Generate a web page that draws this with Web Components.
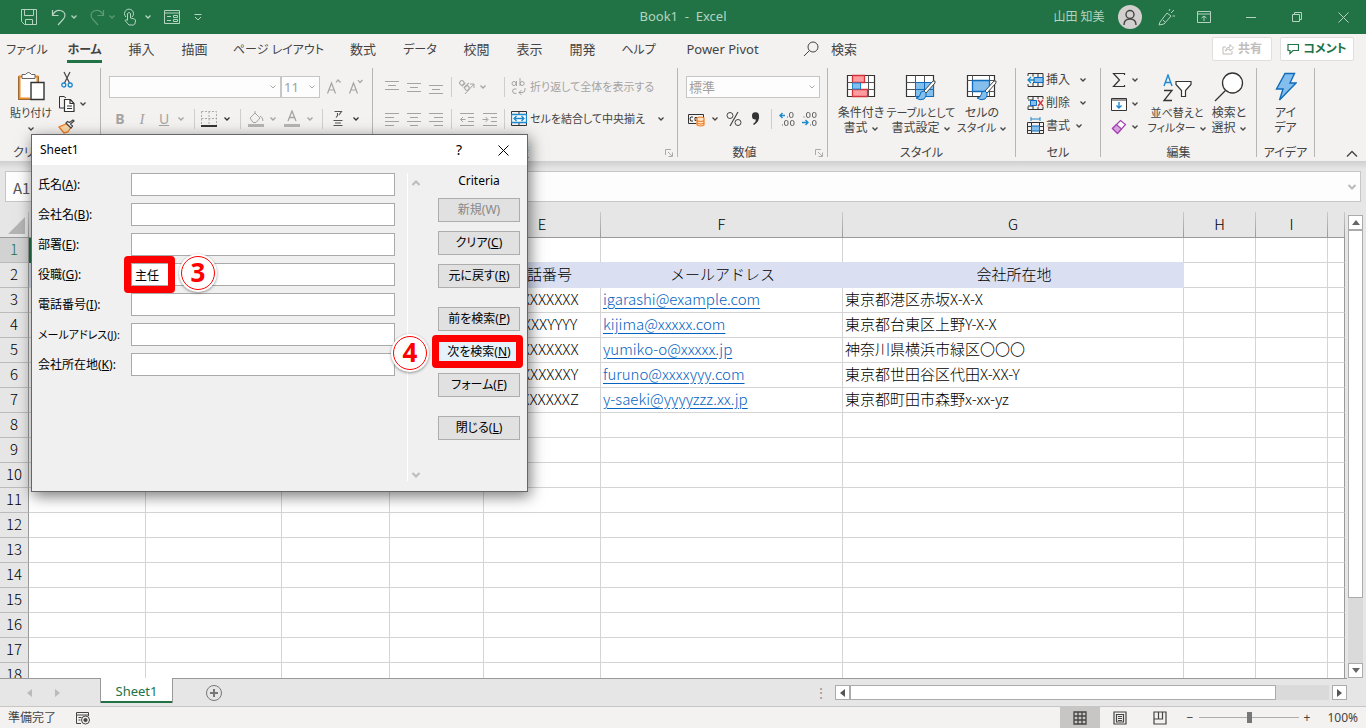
<!DOCTYPE html>
<html lang="ja">
<head>
<meta charset="utf-8">
<title>Book1 - Excel</title>
<style>
html, body { margin: 0; height: 100%; overflow: hidden; }
body { font: 12px/16px "Noto Sans", "Noto Sans CJK JP", sans-serif; color: #444; }
</style>
</head>
<body>
<excel-app></excel-app>
<script>
const define = (name, html, setup) => {
  const template = document.createElement('template');
  template.innerHTML = html;
  customElements.define(name, class extends HTMLElement {
    constructor() {
      super();
      this.attachShadow({ mode: 'open' }).append(template.content.cloneNode(true));
    }
    connectedCallback() { if (setup) setup(this, this.shadowRoot); }
  });
};

/* name: [width, height, markup] */
const brush = '<path d="M28 7 19 17l2 2 9-10q1-3-2-2z" fill="#fff" stroke="#444"/><path d="M19 17q-4 0-4 4-1 3-4 3 4 3 8 1 3-3 2-6z" fill="#83beec" stroke="#0f6cbd"/>';
const ICONS = {
  save: [18, 18, '<path d="M1.5 1.5h15v15h-12l-3-3z M4.5 1.5v6h9v-6 M5.5 16.5v-5h7v5"/>'],
  undo: [16, 18, '<path d="M1.5 2v5.500h6 M1.500 7.500Q4 2 9 2.500c6 1 6 6 3 9l-5 5.500" stroke-width="1.200"/>'],
  redo: [16, 18, '<path d="M14.500 2v5.500h-6 M14.500 7.500Q12 2 7 2.500c-6 1-6 6-3 9l5 5.500" stroke-width="1.200"/>'],
  touch: [14, 18, '<path d="M3 9a4.500 4.500 0 1 1 6 0 M4.500 12V5.500q1.500-2 3 0V10l4 1q1 .5 1 2-.3 4-2 4H6L2 12.500q1-1.500 2.500 0"/>'],
  form: [18, 16, '<path d="M1.500 1.500h15v13h-15z M1.500 4h15 M4 7.500h4 M4 11.500h4 M10.500 6.500h4v2h-4z M10.500 10.500h4v2h-4z"/>'],
  qat: [8, 8, '<path d="M.5 1.500h7 M1 4l3 3 3-3"/>'],
  chev: [8, 6, '<path d="M1.500 1.500 4 4l2.500-2.500" stroke-width="1.3"/>'],
  chevbig: [10, 8, '<path d="M1.500 2 5 5.500 8.500 2" stroke-width="2"/>'],
  chevup: [12, 8, '<path d="M1 6.500 6 1.500l5 5" stroke-width="1.300"/>'],
  user: [24, 24, '<circle cx="12" cy="12" r="12" fill="#d2d0ce" stroke="none"/><g stroke="#444" stroke-width="1.400"><circle cx="12" cy="9.500" r="4"/><path d="M6 20q0-6 6-6t6 6"/></g>'],
  pen: [18, 18, '<path d="m2 14 7-9 4 3-7 8-5 1z M5 12l2 2 M11 3l1-2 M13 5l3-3 M14.500 8h2.500"/>'],
  ribbonopt: [14, 12, '<path d="M.5.5h13v11H.5z M.5 3h13 M7 10V5 M4.500 7 7 5l2.500 2"/>'],
  min: [10, 10, '<path d="M0 5.500h10"/>'],
  restore: [10, 10, '<path d="M.5 2.500h7v7h-7z M2.500 2.500v-2h7v7h-2"/>'],
  close: [11, 11, '<path d="m.5.5 10 10 M10.500.5l-10 10"/>'],
  search: [16, 16, '<circle cx="10" cy="6" r="5"/><path d="M6.500 9.500 1 15"/>'],
  share: [12, 12, '<path d="M4 4H1v7h9V8 M3.500 8Q4 4 8 4V1.500L11.500 5 8 8V6Q5 6 3.500 8z"/>'],
  comment: [12, 12, '<path d="M1 1.500h10.500v6H6L3 10.500v-3H1z" stroke-width="1.200"/>'],
  paste: [28, 32, '<path d="M1.500 6.500h20v23h-20z" fill="#fff"/><path d="M6 6.500H2.500v22H13 M17 6.500h3.500V12" stroke="#ef8c22" stroke-width="2"/><path d="M5 8.500h13v-4h-3.500q-3-4-6 0H5z" fill="#fff" stroke="#666"/><path d="M14 12.500h13v17H14z" fill="#fff" stroke="#333" stroke-width="1.400"/>'],
  cut: [12, 18, '<path d="m3 1 5.500 11 M9 1 3.500 12" stroke="#444" stroke-width="1.200"/><circle cx="2.800" cy="14" r="2" stroke="#1e88d0" stroke-width="1.300"/><circle cx="9.200" cy="14" r="2" stroke="#1e88d0" stroke-width="1.300"/>'],
  copy: [18, 18, '<path d="M6 13H1.500V1.500H6L8 3" stroke="#333"/><path d="M6.500 4.500h6l3.500 4v8H6.500z M12 4.500v4h4 M9 11h5 M9 13.500h5" fill="#fff" stroke="#333" stroke-width="1.200"/>'],
  painter: [18, 16, '<path d="M1 8l5 6 4-1 3-5-5-3z" fill="#fbd7a8" stroke="#ef7d22" stroke-width="1.300"/><path d="m8 4 5 5 1.500-2-2-2L16 2l-1-1-3.500 2.500-2-1z" fill="#fff" stroke="#444" stroke-width="1.200"/>'],
  border: [16, 16, '<path d="M.5.5h15v14H.5z M8 .5v14 M.5 7.500h15" stroke="#aaa" stroke-dasharray="2 1.500"/><path d="M0 15h16" stroke="#333" stroke-width="2"/>'],
  fill: [18, 18, '<path d="m3 8 5-5 5 5-4 4.500H6z M8 3V1 M13 6q3 1 3 5"/><path d="M1 15.500h16" stroke-width="3" opacity=".8"/>'],
  fontcolor: [18, 18, '<path d="M5 11 9 1l4 10 M6.500 7.500h5" stroke-width="1.300"/><path d="M1 15.500h16" stroke-width="3" opacity=".8"/>'],
  ruby: [10, 18, '<path d="M1.500 1.500h7L6 5 M4.500 3v2.500L3 7.500 M.5 10.500h9 M2 13h6 M.5 15.500h9" stroke-width="1.100"/>'],
  grow: [16, 16, '<path d="M1.500 14.500 5.500 4l4 10.500 M3 11h5.500 M10 3.500 12 1l2.500 2.500" stroke-width="1.200"/>'],
  shrink: [16, 16, '<path d="M1.500 14.500 5.500 4l4 10.500 M3 11h5.500 M10 1l2 2.500L14.500 1" stroke-width="1.200"/>'],
  atop: [16, 16, '<path d="M1 2.500h14 M4 6.500h8 M1 10.500h14"/>'],
  amid: [16, 16, '<path d="M1 4.500h14 M4 8.500h8 M1 12.500h14"/>'],
  abot: [16, 16, '<path d="M1 6.500h14 M4 10.500h8 M1 14.500h14"/>'],
  left: [16, 14, '<path d="M1 1.500h14 M1 5.500h9 M1 9.500h14 M1 13.500h9"/>'],
  center: [16, 14, '<path d="M1 1.500h14 M4 5.500h8 M1 9.500h14 M4 13.500h8"/>'],
  right: [16, 14, '<path d="M1 1.500h14 M6 5.500h9 M1 9.500h14 M6 13.500h9"/>'],
  outdent: [16, 14, '<path d="M1 1.500h14 M9 5.500h6 M9 9.500h6 M1 13.500h14 M6.500 7.500h-5 M4 5 1.500 7.500 4 10"/>'],
  indent: [16, 14, '<path d="M1 1.500h14 M9 5.500h6 M9 9.500h6 M1 13.500h14 M.5 7.500h5 M3.500 5 6 7.500 3.500 10"/>'],
  orient: [18, 18, '<g transform="rotate(45 6 7)"><circle cx="3" cy="7" r="2.200"/><path d="M5.500 4.500v5 M8 2v7.500"/><circle cx="10.200" cy="7" r="2.200"/></g><path d="m7 16 9-10 M12 6h4v4"/>'],
  wrap: [16, 18, '<circle cx="3" cy="5.500" r="2"/><path d="M5.500 3v5 M9 0v8 M5.500 11q-4-1-4 2t4 2.500 M14 10v2q0 2.500-3 2.500H8 M10.500 12 8 14.500l2.500 2.500"/><circle cx="11.200" cy="5.500" r="2"/>'],
  merge: [16, 16, '<path d="M.5.5h15v14H.5z M8 .5v3 M8 11.500v3" stroke="#333"/><path d="M.5 3.500h15v8H.5z" fill="#fff" stroke="#1e88d0" stroke-width="1.300"/><path d="M3 7.500h10 M5.500 5 3 7.500 5.500 10 M10.500 5 13 7.500 10.500 10" stroke="#1e88d0" stroke-width="1.300"/>'],
  launch: [8, 8, '<path d="M.5 6V.5H6 M3 3l4 4 M7.500 3.500v4h-4"/>'],
  money: [18, 16, '<path d="M.5 3.500h15v9H.5z M5 6q-3-1-3 2t3 2 M7 6.500h2v3H7z M11 6.500h2" stroke="#333"/><path d="M8.500 7.500h8v7h-8z" fill="#fff" stroke="none"/><path d="M9 7v7q4 2 7 0V7q-3.500-2-7 0z M9 9.500q4 2 7 0 M9 12q4 2 7 0" fill="#fde3c8" stroke="#ef7d22" stroke-width="1.200"/>'],
  percent: [16, 16, '<circle cx="4" cy="4.500" r="3"/><circle cx="12" cy="11.500" r="3"/><path d="M12 1 4 15" stroke-width="1.200"/>'],
  comma: [10, 14, '<path d="M1 4a3.500 3.500 0 0 1 7-.5Q9 9 3 13l-1-1q3-2 3-4.500Q1 8 1 4z" fill="#333" stroke="none"/>'],
  inc: [16, 16, '<path d="M6 4.500H1 M3.500 2 1 4.500 3.500 7" stroke="#1e88d0" stroke-width="1.400"/><g stroke="#666"><rect x="10.500" y="1.500" width="3.500" height="5" rx="1.500"/><rect x="5.500" y="9.500" width="3.500" height="5" rx="1.500"/><rect x="11.500" y="9.500" width="3.500" height="5" rx="1.500"/><path d="M3 14h1 M8 6h1"/></g>'],
  dec: [16, 16, '<path d="M1 11.500h6 M4.500 9 7 11.500 4.500 14" stroke="#1e88d0" stroke-width="1.400"/><g stroke="#666"><rect x="5.500" y="1.500" width="3.500" height="5" rx="1.500"/><rect x="11.500" y="1.500" width="3.500" height="5" rx="1.500"/><rect x="11.500" y="9.500" width="3.500" height="5" rx="1.500"/><path d="M2.500 6h1 M9 14h1"/></g>'],
  cond: [30, 28, '<path d="M1.500 1.500h27v21h-27z" fill="#fff" stroke="#333" stroke-width="1.200"/><path d="M1.500 8.500h27 M1.500 15.500h27 M6.500 1.500v21 M22.500 1.500v21" stroke="#555"/><path d="M6.500 1.500h12v7h-12z M6.500 15.500h15v7h-15z" fill="#ff9ca0" stroke="#d13438" stroke-width="1.300"/><path d="M6.500 9h8v6h-8z" fill="#83beec" stroke="#1e88d0"/>'],
  tablefmt: [32, 28, '<path d="M1.500 1.500h27v21h-27z" fill="#fff" stroke="#333" stroke-width="1.200"/><path d="M1.500 8.500h27 M1.500 15.500h27 M10.500 1.500v21 M19.500 1.500v21" stroke="#555"/><path d="M10.500 8.500h18v14h-18z M10.500 15.500h18 M19.500 8.500v14" fill="#83beec" stroke="#0f6cbd"/>' + brush],
  cellstyle: [32, 28, '<path d="M1.500 1.500h27v21h-27z" fill="#fff" stroke="#333" stroke-width="1.200"/><path d="M1.500 6.500h27 M1.500 17.500h27 M6.500 1.500v21 M23.500 1.500v21" stroke="#555"/><path d="M6.500 6.500h17v11h-17z" fill="#83beec" stroke="#0f6cbd" stroke-width="1.300"/>' + brush],
  cellins: [17, 16, '<path d="M1 4V1.500h15v13H1V12 M6 1.500v3 M11 1.500v13 M6 11v3.500 M6 10.500h10" stroke="#333"/><path d="M7 5.500h9v5H7z" fill="#83beec" stroke="#0f6cbd"/><path d="M8 8H1 M4 5 1 8l3 3" stroke="#1e88d0" stroke-width="1.300"/>'],
  celldel: [17, 16, '<path d="M1 4V1.500h15V4 M1 11.500v3h15v-3 M6 1.500v13 M11 1.500V4 M11 12v2.500 M1 5h5 M1 11h5" stroke="#333"/><path d="M3.500 5.500h6v5h-6z" fill="#83beec" stroke="#0f6cbd"/><path d="m11 5 5 6 M16 5l-5 6" stroke="#d13438" stroke-width="1.400"/>'],
  cellfmt: [17, 18, '<path d="M.5 5.500h16v11H.5z M4.500 5.500v11 M12.500 5.500v11 M.5 9.500h16 M.5 13.500h16" stroke="#333"/><path d="M4.500 9h8v5h-8z" fill="#83beec" stroke="#0f6cbd"/><path d="M4 2h9 M4 0v4 M13 0v4" stroke="#1e88d0"/>'],
  sum: [14, 16, '<path d="M12.500 3V1.500h-11L7.500 8l-6 6.500h11V13" stroke="#333" stroke-width="1.200"/>'],
  filldown: [16, 14, '<path d="M.5 1.500h15v12H.5z M.5 3h15" fill="#fff" stroke="#333"/><path d="M8 5v6 M5.500 8.500 8 11l2.500-2.500" stroke="#1e88d0" stroke-width="1.400"/>'],
  eraser: [16, 16, '<path d="m1.500 9.500 8-8 5 4-8 9z" fill="#fff" stroke="#a23fb0" stroke-width="1.200"/><path d="m1.500 9.500 4-4 5 4.500-4 4.500z" fill="#d9a0e0" stroke="#a23fb0" stroke-width="1.200"/>'],
  sort: [30, 28, '<path d="m2 12 4-11 4 11 M3.500 8.500h5" stroke="#1e88d0" stroke-width="1.400"/><path d="M2 16.500h8l-8 10h8" stroke="#333" stroke-width="1.300"/><path d="M14 7.500h15v3l-5.500 6v6h-4v-6l-5.500-6z" fill="#fff" stroke="#333" stroke-width="1.200"/>'],
  find: [30, 30, '<circle cx="18.500" cy="11" r="10" fill="#fff" stroke="#333" stroke-width="1.300"/><path d="M11.500 18.500 1 29" stroke="#333" stroke-width="1.300"/>'],
  bolt: [22, 30, '<path d="M10 1.500h9.500L15 11h6L4.500 28 8 17H1.500z" fill="#83beec" stroke="#0f6cbd" stroke-width="1.400"/>'],
  macro: [16, 14, '<path d="M6 12.500H1.500V1.500h12V5 M1.500 4h12 M3.500 6.500h3 M3.500 9h2" stroke="#444"/><circle cx="10.500" cy="9" r="4"/><circle cx="10.500" cy="9" r="1.600" fill="currentColor"/>'],
  plus: [18, 18, '<circle cx="9" cy="9" r="7.500"/><path d="M5 9h8 M9 5v8" stroke-width="2"/>'],
  triu: [8, 5, '<path d="m4 0 4 5H0z" fill="currentColor" stroke="none"/>'],
  trid: [8, 5, '<path d="m4 5 4-5H0z" fill="currentColor" stroke="none"/>'],
  tril: [5, 8, '<path d="m0 4 5-4v8z" fill="currentColor" stroke="none"/>'],
  trir: [5, 8, '<path d="M5 4 0 0v8z" fill="currentColor" stroke="none"/>'],
  vnormal: [14, 14, '<path d="M1 1h12v12H1z M5 1v12 M9 1v12 M1 5h12 M1 9h12" stroke-width="1.300"/>'],
  vpage: [14, 14, '<path d="M1 1h12v12H1z M3.500 3.500h7v7.500h-7z M5 5.500h4 M5 7.500h4 M5 9.500h4" stroke-width="1.200"/>'],
  vbreak: [14, 14, '<path d="M1 1h12v12H1z M5.500 1v7 M9.500 1v7h-8.500" stroke-width="1.200"/>'],
  all: [17, 17, '<path d="M17 0v17H0z" fill="#b4b4b4" stroke="none"/>']
};
define('x-icon', '<style>:host{display:inline-flex;flex:none}svg{display:block;fill:none;stroke:currentColor}</style><span></span>', (el, root) => {
  const [w, h, body] = ICONS[el.getAttribute('name')];
  root.querySelector('span').innerHTML = `<svg width="${w}" height="${h}" viewBox="0 0 ${w} ${h}" aria-hidden="true">${body}</svg>`;
});

/* icon-only or icon + text command */
define('tool-button', `<style>
:host{display:flex;align-items:center;justify-content:center}
button{font:inherit;color:inherit;background:none;border:0;padding:0;display:flex;align-items:center;gap:var(--gap,0);white-space:nowrap;font-feature-settings:"palt"}
</style><button type="button"><slot></slot></button>`, (el, root) => {
  root.querySelector('button').setAttribute('aria-label', el.getAttribute('label') || el.textContent.trim() || 'コマンド');
});

define('big-button', `<style>
:host{display:block}
button{font:inherit;line-height:15px;color:inherit;background:none;border:0;padding:0;width:100%;display:flex;flex-direction:column;align-items:center;white-space:nowrap;font-feature-settings:"palt"}
.pic{height:34px;display:flex;align-items:flex-end;margin-bottom:3px}
</style><button type="button"><span class="pic"><slot name="icon"></slot></span><slot></slot></button>`);

define('title-bar', `<style>
:host{display:grid;grid-template-columns:1fr auto 1fr;align-items:center;height:34px;background:#217346;color:#b4d3c1;flex:none}
.qat{display:grid;grid-template-columns:18px 29px 14px 24px 14px 18px 22px 22px 34px;justify-items:center;align-items:center;padding-left:20px}
.qat tool-button{justify-self:end}
.off{opacity:.4}
.title{white-space:pre;font-size:13px;margin-top:-2px}
.right{display:grid;grid-template-columns:54px 48px 26px 48px 46px 46px 46px;justify-items:center;align-items:center;justify-content:end;white-space:nowrap}
</style>
<div class="qat">
<tool-button label="上書き保存"><x-icon name="save"></x-icon></tool-button>
<tool-button label="元に戻す"><x-icon name="undo"></x-icon></tool-button>
<x-icon name="chev"></x-icon>
<tool-button class="off" label="やり直し"><x-icon name="redo"></x-icon></tool-button>
<x-icon class="off" name="chev"></x-icon>
<tool-button label="タッチ"><x-icon name="touch"></x-icon></tool-button>
<x-icon name="chev"></x-icon>
<tool-button label="フォーム"><x-icon name="form"></x-icon></tool-button>
<x-icon name="qat"></x-icon>
</div>
<div class="title">Book1  -  Excel</div>
<div class="right"><span>山田 知美</span><x-icon name="user"></x-icon><x-icon name="pen"></x-icon>
<tool-button label="リボンの表示"><x-icon name="ribbonopt"></x-icon></tool-button>
<tool-button label="最小化"><x-icon name="min"></x-icon></tool-button>
<tool-button label="元のサイズ"><x-icon name="restore"></x-icon></tool-button>
<tool-button label="閉じる"><x-icon name="close"></x-icon></tool-button></div>`);

define('tab-strip', `<style>
:host{display:flex;height:34px;background:#f3f2f1;align-items:center;flex:none;font-size:13px;font-feature-settings:"palt"}
nav{display:grid;grid-template-columns:54px 61px 53px 53px 115px 54px 60px 53px 53px 53px 59px 109px;justify-items:center;align-items:center}
a{box-sizing:border-box;height:24px;color:#444;text-decoration:none;white-space:nowrap;line-height:20px;border-bottom:3px solid transparent}
a.k{font-size:12px;line-height:22px}
a.on{font-weight:700;border-color:#217346}
.find{margin-left:26px;--gap:12px;margin-top:-4px}
.acts{margin-left:auto;display:flex;gap:8px;padding-right:12px;margin-top:-4px}
.acts button{box-sizing:border-box;height:24px;border:1px solid #e1dfdd;border-radius:2px;background:#fff;display:flex;align-items:center;justify-content:center;gap:4px;padding:0 6px;font:700 12px/16px "Noto Sans","Noto Sans CJK JP",sans-serif;font-feature-settings:"palt";color:#217346;width:74px}
.acts button:disabled{color:#c0bebc;width:60px}
</style>
<nav><a class="k" href="#">ファイル</a><a class="k on" href="#">ホーム</a><a href="#">挿入</a><a href="#">描画</a><a class="k" href="#">ページ レイアウト</a><a href="#">数式</a><a class="k" href="#">データ</a><a href="#">校閲</a><a href="#">表示</a><a href="#">開発</a><a class="k" href="#">ヘルプ</a><a href="#">Power Pivot</a></nav>
<tool-button class="find" label="検索"><x-icon name="search"></x-icon><span>検索</span></tool-button>
<div class="acts"><button type="button" disabled><x-icon name="share"></x-icon>共有</button><button type="button"><x-icon name="comment"></x-icon>コメント</button></div>`);

define('ribbon-group', `<style>
:host{display:grid;grid-template-rows:1fr 10px;height:89px;border-right:1px solid #b8b6b4;box-sizing:border-box;position:relative;min-width:0}
.cap{text-align:center;line-height:12px;white-space:nowrap;font-feature-settings:"palt"}
x-icon{position:absolute;right:4px;bottom:0;color:#aaa}
:host([launch]) .cap{padding-right:16px}
:host(:not([launch])) x-icon{display:none}
</style><slot></slot><div class="cap"></div><x-icon name="launch"></x-icon>`, (el, root) => {
  root.querySelector('.cap').textContent = el.getAttribute('caption');
});

define('ribbon-bar', `<style>
:host{display:grid;grid-template-columns:101px 272px 305px 150px 188px 85px 156px 58px 1fr;height:93px;background:#f3f2f1;flex:none}
.two{display:grid;grid-template-rows:38px 26px;align-content:start;align-items:center}
.row{display:grid;align-items:center;justify-items:center;height:31px;justify-content:start}
.dim{color:#a6a4a2}
.sep{width:1px;height:20px;background:#d0cecc}
.b{font:700 14px/18px "Noto Sans",sans-serif}.i{font:italic 15px/18px "Liberation Serif",serif}.u{font:14px/18px "Noto Sans",sans-serif;text-decoration:underline}
select{appearance:none;box-sizing:border-box;height:22px;width:100%;border:1px solid #c8c6c4;border-radius:0;background:#fdfdfd url('data:image/svg+xml,%3Csvg xmlns="http://www.w3.org/2000/svg" width="8" height="6"%3E%3Cpath d="M1.500 1.500 4 4l2.500-2.500" fill="none" stroke="%23aaa"/%3E%3C/svg%3E') no-repeat right 3px center;padding:0 2px;font:13px/18px "Noto Sans","Noto Sans CJK JP",sans-serif;color:#a19f9d;opacity:1}
.clip{display:grid;grid-template-columns:54px 18px 14px;align-items:start;padding-left:4px}
.stack{display:grid;grid-template-rows:24px 23px 23px;align-items:center;justify-items:center}
.big3{display:grid;grid-template-columns:62px 58px 64px;padding-left:2px}
.cells{display:grid;grid-template-columns:44px 16px;grid-auto-rows:23px;padding-left:11px;align-items:center}
.cells tool-button{--gap:2px;justify-content:start}
.edit{display:grid;grid-template-columns:42px 68px 36px}
.edit .stack{grid-template-columns:20px 12px;padding-left:8px;grid-auto-rows:23px}
.end{display:flex;align-items:flex-end;justify-content:flex-end;padding:0 8px 3px 0}
.txt{justify-self:start}
.s{font-size:11px}
</style>
<ribbon-group caption="クリップボード"><div class="clip">
<big-button><x-icon slot="icon" name="paste"></x-icon><span class="s">貼り付け</span><span><x-icon name="chev"></x-icon></span></big-button>
<div class="stack"><x-icon name="cut"></x-icon><x-icon name="copy"></x-icon><x-icon name="painter"></x-icon></div>
<div class="stack"><span></span><x-icon name="chev"></x-icon></div>
</div></ribbon-group>
<ribbon-group caption="フォント"><div class="two">
<div class="row" style="grid-template-columns:172px 39px 27px 18px;padding-left:8px">
<select aria-label="フォント" disabled><option></option></select><select aria-label="サイズ" disabled><option>11</option></select>
<tool-button class="dim" label="拡大"><x-icon name="grow"></x-icon></tool-button><tool-button class="dim" label="縮小"><x-icon name="shrink"></x-icon></tool-button></div>
<div class="row dim" style="grid-template-columns:22px 22px 22px 12px 14px 16px 20px 6px 25px 10px 27px 9px 16px 16px 20px;padding-left:8px">
<tool-button><span class="b">B</span></tool-button><tool-button><span class="i">I</span></tool-button><tool-button><span class="u">U</span></tool-button><x-icon name="chev"></x-icon><span class="sep"></span>
<x-icon name="border"></x-icon><x-icon name="chev" style="color:#333"></x-icon><span class="sep"></span><x-icon name="fill"></x-icon><x-icon name="chev"></x-icon><x-icon name="fontcolor"></x-icon><x-icon name="chev"></x-icon><span class="sep"></span><x-icon name="ruby" style="color:#555"></x-icon><x-icon name="chev" style="color:#333"></x-icon></div>
</div></ribbon-group>
<ribbon-group caption="配置" launch><div class="two">
<div class="row dim" style="grid-template-columns:22px 22px 22px 8px 24px 21px 8px 22px 1fr;padding-left:8px">
<x-icon name="atop"></x-icon><x-icon name="amid"></x-icon><x-icon name="abot"></x-icon><span class="sep"></span><x-icon name="orient"></x-icon><x-icon class="txt" name="chev"></x-icon><span class="sep"></span><x-icon name="wrap"></x-icon><tool-button class="txt"><span class="s">折り返して全体を表示する</span></tool-button></div>
<div class="row" style="grid-template-columns:22px 22px 22px 8px 24px 21px 8px 22px 126px 10px;padding-left:8px">
<x-icon class="dim" name="left"></x-icon><x-icon class="dim" name="center"></x-icon><x-icon class="dim" name="right"></x-icon><span class="sep"></span><x-icon class="dim" name="outdent"></x-icon><x-icon class="dim" name="indent"></x-icon><span class="sep"></span><x-icon name="merge"></x-icon><tool-button class="txt"><span class="s">セルを結合して中央揃え</span></tool-button><x-icon name="chev"></x-icon></div>
</div></ribbon-group>
<ribbon-group caption="数値" launch><div class="two">
<div class="row" style="grid-template-columns:134px;padding-left:8px"><select aria-label="表示形式" disabled><option>標準</option></select></div>
<div class="row" style="grid-template-columns:20px 16px 22px 22px 8px 24px 20px;padding-left:9px">
<x-icon name="money"></x-icon><x-icon name="chev"></x-icon><x-icon name="percent"></x-icon><x-icon name="comma"></x-icon><span class="sep"></span><x-icon name="inc"></x-icon><x-icon name="dec"></x-icon></div>
</div></ribbon-group>
<ribbon-group caption="スタイル"><div class="big3">
<big-button><x-icon slot="icon" name="cond"></x-icon><span>条件付き</span><span>書式 <x-icon name="chev"></x-icon></span></big-button>
<big-button><x-icon slot="icon" name="tablefmt"></x-icon><span class="s">テーブルとして</span><span>書式設定 <x-icon name="chev"></x-icon></span></big-button>
<big-button><x-icon slot="icon" name="cellstyle"></x-icon><span>セルの</span><span class="s">スタイル <x-icon name="chev"></x-icon></span></big-button>
</div></ribbon-group>
<ribbon-group caption="セル"><div class="cells">
<tool-button><x-icon name="cellins"></x-icon><span>挿入</span></tool-button><x-icon name="chev" style="justify-self:end"></x-icon>
<tool-button><x-icon name="celldel"></x-icon><span>削除</span></tool-button><x-icon name="chev" style="justify-self:end"></x-icon>
<tool-button><x-icon name="cellfmt"></x-icon><span>書式</span></tool-button><x-icon name="chev" style="justify-self:center"></x-icon>
</div></ribbon-group>
<ribbon-group caption="編集"><div class="edit">
<div class="stack"><x-icon name="sum"></x-icon><x-icon name="chev"></x-icon><x-icon name="filldown"></x-icon><x-icon name="chev"></x-icon><x-icon name="eraser"></x-icon><x-icon name="chev"></x-icon></div>
<big-button><x-icon slot="icon" name="sort"></x-icon><span class="s">並べ替えと</span><span class="s">フィルター <x-icon name="chev"></x-icon></span></big-button>
<big-button><x-icon slot="icon" name="find"></x-icon><span>検索と</span><span>選択 <x-icon name="chev"></x-icon></span></big-button>
</div></ribbon-group>
<ribbon-group caption="アイデア"><big-button><x-icon slot="icon" name="bolt"></x-icon><span>アイ</span><span>デア</span></big-button></ribbon-group>
<div class="end"><x-icon name="chevup"></x-icon></div>`);

define('formula-bar', `<style>
:host{display:grid;grid-template-columns:120px 1fr;gap:30px;align-items:center;box-sizing:border-box;height:51px;padding:0 5px;background:linear-gradient(#cfcfcf,#e6e6e6 8px);flex:none}
input{box-sizing:border-box;width:100%;height:31px;border:1px solid #c6c6c6;background:#fdfdfd;padding:2px 7px 0;font:15px/20px "Noto Sans CJK JP",sans-serif;color:#555}
.f{display:grid;align-items:center}.f>*{grid-area:1/1}
x-icon{justify-self:end;margin-right:4px;color:#bbb}
</style><input aria-label="名前ボックス" value="A1"><div class="f"><input aria-label="数式バー"><x-icon name="chevbig"></x-icon></div>`);

define('sheet-grid', `<style>
:host{display:grid;grid-template-columns:1fr 21px;flex:1;min-height:0;background:#e6e6e6;overflow:hidden}
.view{overflow:hidden;min-height:0}
table{width:100%;table-layout:fixed;border-collapse:separate;border-spacing:0;font:15px/22px "Noto Sans CJK JP",sans-serif;font-weight:300;color:#000;background:#fff}
th,td{box-sizing:border-box;height:25px;padding:0 0 2px;font-weight:300;white-space:nowrap;overflow:hidden;border:solid #d4d4d4;border-width:0 1px 1px 0}
thead th{height:26px;background:#e6e6e6;border-color:#999;border-right:1px solid;border-image:linear-gradient(#ccc,#999) 1}
tbody th{background:#e6e6e6;border-color:#bbb;border-right-color:#999}
tr>:last-child{border-right-color:#999}
.cur th{background:#d2d2d2;color:#217346}
.cur td:nth-child(2){outline:2px solid #217346;outline-offset:-2px}
.cur td:nth-child(-n+8){border-bottom-color:#dae0f2}
.hd td:nth-child(-n+8){background:#dae0f2;border-color:#dae0f2;text-align:center}
td:nth-child(6){text-align:center}
td:nth-child(7),td:nth-child(8){padding-left:2px}
a{color:#0563c1;text-underline-offset:3px}
.corner x-icon{display:flex;justify-content:end;padding:4px 3px 0 0}
.bar{display:flex;flex-direction:column;padding:3px 3px 0}
.bar button{box-sizing:border-box;height:15px;width:15px;padding:0;border:1px solid #ababab;background:#fff;color:#666;display:flex;align-items:center;justify-content:center}
.track{flex:1;background:#dadada}
.thumb{box-sizing:border-box;height:85%;width:15px;background:#fff;border:1px solid #ababab}
</style>
<div class="view"><table><colgroup><col style="width:29px"><col style="width:117px"><col style="width:136px"><col style="width:108px"><col style="width:94px"><col style="width:117px"><col style="width:242px"><col style="width:341px"><col style="width:72px"><col style="width:72px"><col></colgroup><thead></thead><tbody></tbody></table></div>
<div class="bar"><button type="button" aria-label="上へ"><x-icon name="triu"></x-icon></button><div class="track"><div class="thumb"></div></div><button type="button" aria-label="下へ"><x-icon name="trid"></x-icon></button></div>`, (el, root) => {
  const data = {
    2: ['電話番号', 'メールアドレス', '会社所在地'],
    3: ['XXXXXXXXX', 'igarashi@example.com', '東京都港区赤坂X-X-X'],
    4: ['XXXXXYYYY', 'kijima@xxxxx.com', '東京都台東区上野Y-X-X'],
    5: ['XXXXXXXXX', 'yumiko-o@xxxxx.jp', '神奈川県横浜市緑区〇〇〇'],
    6: ['XXXXXXXXY', 'furuno@xxxxyyy.com', '東京都世田谷区代田X-XX-Y'],
    7: ['XXXXXXXXZ', 'y-saeki@yyyyzzz.xx.jp', '東京都町田市森野x-xx-yz']
  };
  root.querySelector('thead').innerHTML = '<tr><th class="corner"><x-icon name="all"></x-icon></th>' + [...'ABCDEFGHI'].map(c => `<th scope="col">${c}</th>`).join('') + '<th></th></tr>';
  root.querySelector('tbody').innerHTML = Array.from({ length: 18 }, (_, i) => {
    const n = i + 1, [tel = '', mail = '', addr = ''] = data[n] || [];
    const link = mail.includes('@') ? `<a href="mailto:${mail}">${mail}</a>` : mail;
    return `<tr class="${n === 1 ? 'cur' : n === 2 ? 'hd' : ''}"><th scope="row">${n}</th><td></td><td></td><td></td><td></td><td>${tel}</td><td>${link}</td><td>${addr}</td><td></td><td></td><td></td></tr>`;
  }).join('');
});

define('sheet-tabs', `<style>
:host{display:grid;grid-template-columns:100px 73px 1fr 21px 512px 19px;height:28px;background:#e6e6e6;flex:none}
.nav,.new,.more{border-top:1px solid #999;box-sizing:border-box;display:flex;align-items:center}
.nav{gap:23px;padding-left:27px;color:#bbb}
.new{padding-left:32px;color:#777}
.more{color:#999;font-size:14px}
a{box-sizing:border-box;height:25px;background:#fff;border:solid #999;border-width:0 1px;box-shadow:inset 0 -2px #217346;color:#217346;text-decoration:none;text-align:center;font-size:13px;line-height:26px}
.h{display:flex;border-top:1px solid #999;padding-top:6px;align-items:start}
.h button{box-sizing:border-box;width:15px;height:15px;padding:0;border:1px solid #ababab;background:#fff;color:#555;display:flex;align-items:center;justify-content:center;flex:none}
.track{flex:1;background:#dadada;margin-right:3px}
.thumb{box-sizing:border-box;width:89%;height:15px;border:1px solid #ababab;background:#fff}
</style>
<div class="nav"><x-icon name="tril"></x-icon><x-icon name="trir"></x-icon></div><a href="#">Sheet1</a>
<div class="new"><tool-button label="新しいシート"><x-icon name="plus"></x-icon></tool-button></div><div class="more">⋮</div>
<div class="h"><button type="button" aria-label="左へ"><x-icon name="tril"></x-icon></button><div class="track"><div class="thumb"></div></div><button type="button" aria-label="右へ"><x-icon name="trir"></x-icon></button></div>`);

define('status-bar', `<style>
:host{display:flex;align-items:center;box-sizing:border-box;height:22px;border-top:1px solid #c8c6c4;background:#f3f2f1;flex:none;padding:0 8px;gap:19px}
.views{display:grid;grid-template-columns:40px 40px 40px;margin-left:auto;align-self:stretch}
.views .on{background:#c8c6c4}
.zoom{display:grid;grid-template-columns:18px 100px 16px 43px;align-items:center;justify-items:center;margin-left:-18px}
input{appearance:none;width:100px;height:14px;margin:0;background:linear-gradient(#b0aeac,#b0aeac) center/100% 1px no-repeat}
input::-webkit-slider-thumb{appearance:none;width:5px;height:11px;background:#777}
.zoom span:last-child{justify-self:end}
</style><span>準備完了</span><x-icon name="macro"></x-icon>
<div class="views"><tool-button class="on" label="標準"><x-icon name="vnormal"></x-icon></tool-button><tool-button label="ページ レイアウト"><x-icon name="vpage"></x-icon></tool-button><tool-button label="改ページ プレビュー"><x-icon name="vbreak"></x-icon></tool-button></div>
<div class="zoom"><span>−</span><input type="range" aria-label="ズーム"><span>+</span><span>100%</span></div>`);

define('step-badge', `<style>
:host{position:absolute;box-sizing:border-box;width:38px;height:38px;border-radius:50%;background:#fff;padding:2px;box-shadow:0 1px 3px #0006}
div{box-sizing:border-box;height:34px;border:1px solid #f00;border-radius:50%;color:#f00;text-align:center;font:700 26px/31px "Noto Sans","Noto Sans CJK JP",sans-serif}
</style><div><slot></slot></div>`);

define('form-dialog', `<style>
:host{display:block;position:absolute;left:31px;top:134px;width:497px;box-sizing:border-box;border:1px solid #666;background:#f0f0f0;box-shadow:2px 4px 14px #0008;color:#000;font-feature-settings:"palt"}
header{display:flex;align-items:center;height:30px;background:#fff;padding:0 18px 0 8px}
header b{font-weight:400;flex:1}
header .q{font-size:14px;margin-right:36px}
.body{display:grid;grid-template-columns:357px 12px 31px 82px;padding:8px 7px 0 6px;height:318px}
.fields{display:grid;grid-template-columns:93px 264px;grid-auto-rows:23px;row-gap:7px;align-items:center;align-content:start}
label{white-space:nowrap}
.s{font-size:11px}
.fields input{box-sizing:border-box;width:264px;height:23px;border:1px solid #aaa;background:#fff;padding:0 3px;font:12px/16px "Noto Sans","Noto Sans CJK JP",sans-serif;color:#000}
.scroll{border-left:1px solid #fff;margin-left:12px;display:flex;flex-direction:column;justify-content:space-between;padding:6px 3px 2px;width:10px;color:#bbb;height:300px}
.btns{grid-column:4;display:flex;flex-direction:column;gap:9px}
.btns p{margin:0;text-align:center;line-height:16px}
.btns button{box-sizing:border-box;height:24px;border:1px solid #adadad;background:#e1e1e1;padding:0;font:inherit;font-feature-settings:inherit;color:#000;white-space:nowrap}
.btns button:disabled{color:#888}
.btns .hot{background:#e5f1fb}
.btns .gap{margin-top:10px}
.mark{position:absolute;box-sizing:border-box;border:7px solid #f00;border-radius:4px;pointer-events:none}
</style>
<header><b>Sheet1</b><span class="q">?</span><tool-button label="閉じる"><x-icon name="close"></x-icon></tool-button></header>
<div class="body"><div class="fields">
<label for="a">氏名(<u>A</u>):</label><input id="a">
<label for="b">会社名(<u>B</u>):</label><input id="b">
<label for="e">部署(<u>E</u>):</label><input id="e">
<label for="g">役職(<u>G</u>):</label><input id="g" value="主任">
<label for="i">電話番号(<u>I</u>):</label><input id="i">
<label for="j" class="s">メールアドレス(<u>J</u>):</label><input id="j">
<label for="k">会社所在地(<u>K</u>):</label><input id="k">
</div><div class="scroll"><x-icon name="chevbig" style="transform:rotate(180deg)"></x-icon><x-icon name="chevbig"></x-icon></div>
<div class="btns"><p>Criteria</p>
<button type="button" disabled>新規(W)</button>
<button type="button">クリア(<u>C</u>)</button>
<button type="button">元に戻す(<u>R</u>)</button>
<button type="button" class="gap">前を検索(<u>P</u>)</button>
<button type="button" class="hot">次を検索(<u>N</u>)</button>
<button type="button">フォーム(<u>F</u>)</button>
<button type="button" class="gap">閉じる(<u>L</u>)</button>
</div></div>
<div class="mark" style="left:92px;top:121px;width:51px;height:37px"></div>
<div class="mark" style="left:400px;top:200px;width:91px;height:33px"></div>
<step-badge style="left:147px;top:119px">3</step-badge>
<step-badge style="left:359px;top:199px">4</step-badge>`);

define('excel-app', `<style>
:host{display:flex;flex-direction:column;height:100vh;position:relative;overflow:hidden}
</style><title-bar></title-bar><tab-strip></tab-strip><ribbon-bar></ribbon-bar><formula-bar></formula-bar><sheet-grid></sheet-grid><sheet-tabs></sheet-tabs><status-bar></status-bar><form-dialog></form-dialog>`);
</script>
</body>
</html>
